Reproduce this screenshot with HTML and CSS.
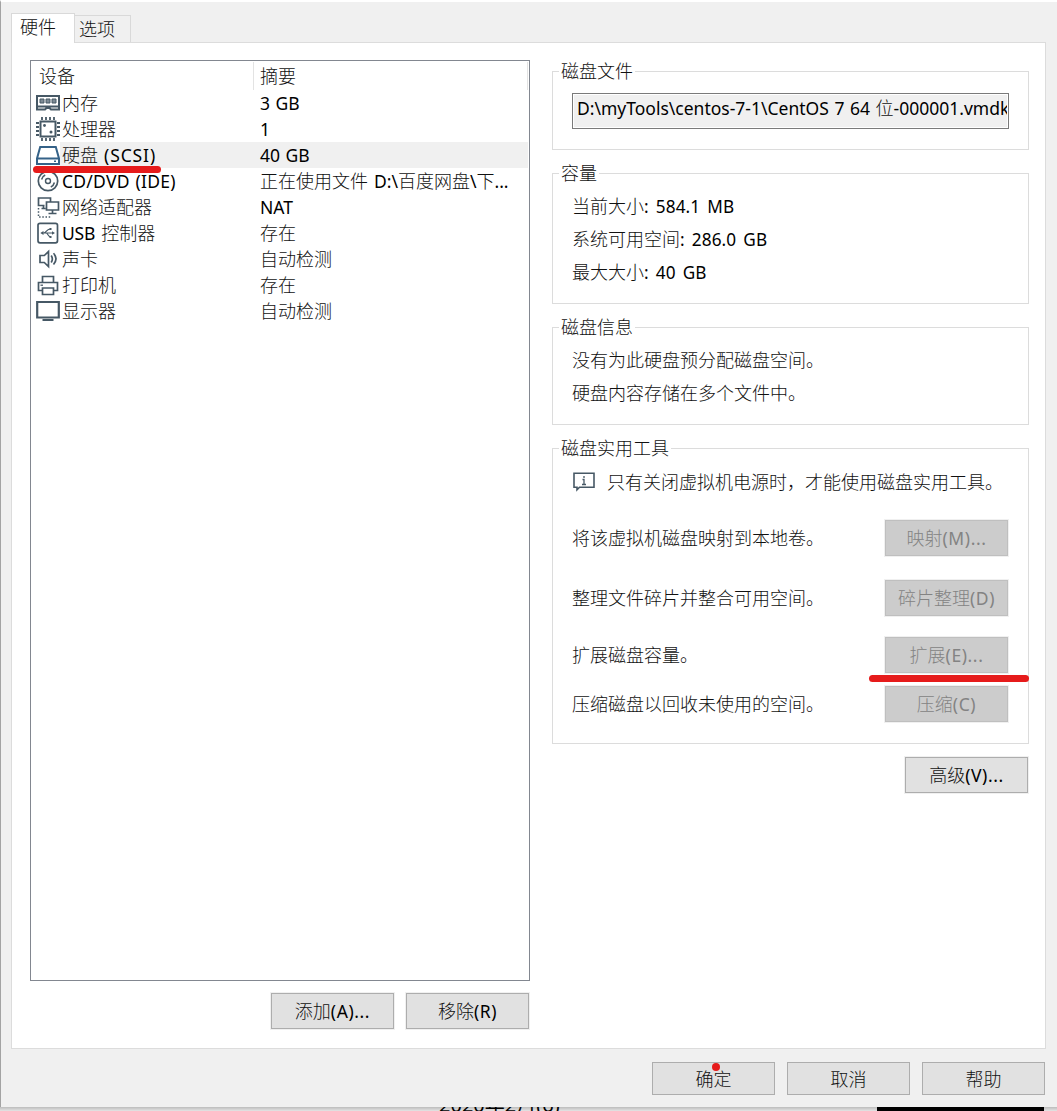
FILE: index.html
```html
<!DOCTYPE html>
<html lang="zh-CN">
<head>
<meta charset="utf-8">
<title>虚拟机设置</title>
<link rel="stylesheet" href="styles.css">
</head>
<body>
<main class="dialog">
  <nav class="tabs">
    <div class="tab tab-active">硬件</div>
    <div class="tab">选项</div>
  </nav>
  <section class="panel">
    <div class="left">
      <div class="devices">
        <div class="head"><span class="head-device">设备</span><span class="head-summary">摘要</span></div>
        <div class="row">
          <svg class="icon" viewBox="0 0 26 26"><path d="M2 6h22v10.500H2zM2 19.500h8l1.500-1.500h3l1.500 1.500h8M2 6v14.500M24 6v14.500" fill="none" stroke="#465865" stroke-width="2"/><path d="M5 9h4v4H5zM11 9h4v4h-4zM17 9h4v4h-4z" fill="#7d8a94" stroke="#465865"/></svg>
          <span class="name">内存</span><span class="value"><b>3 GB</b></span>
        </div>
        <div class="row">
          <svg class="icon" viewBox="0 0 26 26"><path d="M5.500 5.500h15v15h-15z" fill="none" stroke="#465865" stroke-width="2"/><path d="M7 1v3M11 1v3M15 1v3M19 1v3M7 22v3M11 22v3M15 22v3M19 22v3M1 7h3M1 11h3M1 15h3M1 19h3M22 7h3M22 11h3M22 15h3M22 19h3" stroke="#465865" stroke-width="1.800"/><circle cx="9.500" cy="9.500" r="1.400" fill="#465865"/><circle cx="16" cy="16" r="1.500" fill="#465865"/></svg>
          <span class="name">处理器</span><span class="value"><b>1</b></span>
        </div>
        <div class="row row-selected">
          <svg class="icon" viewBox="0 0 26 26"><path d="M5.200 5h15.600L24 16.500V22H2v-5.500zM2 16.500h22" fill="#fff" stroke="#356288" stroke-width="2"/><path d="M19 19.300h2" stroke="#356288" stroke-width="1.500"/></svg>
          <span class="name">硬盘 <b>(SCSI)</b></span><span class="value"><b>40 GB</b></span>
          <i class="mark mark-disk"></i>
        </div>
        <div class="row">
          <svg class="icon" viewBox="0 0 26 26" fill="none" stroke="#465865"><circle cx="13" cy="13" r="9.700" stroke-width="1.700"/><circle cx="13" cy="13" r="2.500" stroke-width="1.400"/><path d="M6.600 11.500a6.700 6.700 0 0 1 3.600-4.500M19.400 14.500a6.700 6.700 0 0 1-3.600 4.500" stroke-width="1.500"/></svg>
          <span class="name"><b>CD/DVD (IDE)</b></span><span class="value">正在使用文件 <b>D:\</b>百度网盘<b>\</b>下<b>...</b></span>
        </div>
        <div class="row">
          <svg class="icon" viewBox="0 0 26 26" fill="none" stroke="#465865" stroke-width="1.700"><path d="M9.500 11.500h-6V4h12v4M6.500 14.500h4M8.500 11v3.500M11.500 8h12v8h-12zM17.500 16v3M13.500 19.500h8"/><path d="M3.500 14v9h13" stroke-dasharray="1.500 1.700" stroke-width="1.500"/></svg>
          <span class="name">网络适配器</span><span class="value"><b>NAT</b></span>
        </div>
        <div class="row">
          <svg class="icon" viewBox="0 0 26 26" fill="none" stroke="#465865"><rect x="3" y="3.300" width="19.500" height="19.500" rx="2" stroke-width="1.700"/><path d="M7 13h11M8.500 13c3 0 3-4 7-4M11 13c2 0 2 4 5 4" stroke-width="1.200"/><path d="M8.500 11v4L5.300 13zM17 11.200v3.600l3-1.800zM14.500 8h2v2h-2zM14.500 16h2v2h-2z" fill="#465865" stroke="none"/></svg>
          <span class="name"><b class="usb">USB</b> 控制器</span><span class="value">存在</span>
        </div>
        <div class="row">
          <svg class="icon" viewBox="0 0 26 26" fill="none" stroke="#465865" stroke-width="1.700"><path d="M5 9.500h4.300L13.500 5.500v15l-4.200-4H5zM16.200 9.500q2.300 3.500 0 7M18.500 7.300q5 5.500 0 11.200"/></svg>
          <span class="name">声卡</span><span class="value">自动检测</span>
        </div>
        <div class="row">
          <svg class="icon" viewBox="0 0 26 26" fill="none" stroke="#465865" stroke-width="1.700"><path d="M7.500 10.500v-6h11v6M7.500 18.500h-4v-8h19v8h-4M7.500 16h11v6.500h-11z"/><path d="M5.500 13.200H8" stroke-width="1.300"/></svg>
          <span class="name">打印机</span><span class="value">存在</span>
        </div>
        <div class="row">
          <svg class="icon" viewBox="0 0 26 26"><path d="M2.200 4h21.600v15.500H2.200z" fill="none" stroke="#465865" stroke-width="2.200"/><path d="M7.500 22h11" stroke="#465865" stroke-width="2"/></svg>
          <span class="name">显示器</span><span class="value">自动检测</span>
        </div>
      </div>
      <div class="actions">
        <button class="btn">添加<b>(A)...</b></button>
        <button class="btn">移除<b>(R)</b></button>
      </div>
    </div>
    <div class="right">
      <section class="group group-file">
        <h2>磁盘文件</h2>
        <div class="path"><b>D:\myTools\centos-7-1\CentOS 7 64 </b>位<b>-000001.vmdk</b></div>
      </section>
      <section class="group group-size">
        <h2>容量</h2>
        <p>当前大小<b>: 584.1 MB</b></p>
        <p>系统可用空间<b>: 286.0 GB</b></p>
        <p>最大大小<b>: 40 GB</b></p>
      </section>
      <section class="group group-info">
        <h2>磁盘信息</h2>
        <p>没有为此硬盘预分配磁盘空间。</p>
        <p>硬盘内容存储在多个文件中。</p>
      </section>
      <section class="group group-tools">
        <h2>磁盘实用工具</h2>
        <div class="note">
          <svg class="note-icon" viewBox="0 0 24 22"><path d="M2 2.200h20v14H7.500L5 18.800v-2.600H2z" fill="none" stroke="#465865" stroke-width="1.600"/><path d="M12 5v2M10.500 8.500H12V13M10 13.500h4" fill="none" stroke="#465865" stroke-width="1.300"/></svg>
          <span>只有关闭虚拟机电源时，才能使用磁盘实用工具。</span>
        </div>
        <div class="tool"><span>将该虚拟机磁盘映射到本地卷。</span><button class="btn" disabled>映射<b>(M)...</b></button></div>
        <div class="tool tool-defrag"><span>整理文件碎片并整合可用空间。</span><button class="btn" disabled>碎片整理<b>(D)</b></button></div>
        <div class="tool tool-expand"><span>扩展磁盘容量。</span><button class="btn" disabled>扩展<b>(E)...</b></button><i class="mark mark-expand"></i></div>
        <div class="tool tool-compact"><span>压缩磁盘以回收未使用的空间。</span><button class="btn" disabled>压缩<b>(C)</b></button></div>
      </section>
      <button class="btn advanced">高级<b>(V)...</b></button>
    </div>
  </section>
  <footer class="footer">
    <button class="btn">确定<i class="dot"></i></button>
    <button class="btn">取消</button>
    <button class="btn">帮助</button>
  </footer>
</main>
<div class="behind"><span class="date">2020年2月(6)</span><span class="block"></span></div>
</body>
</html>
```
FILE: styles.css
```css
* { box-sizing: border-box; }
body {
  margin: 0;
  width: 1057px;
  height: 1111px;
  overflow: hidden;
  background: #fff;
  color: #111;
  font: 300 18px/26px "Noto Sans CJK SC", sans-serif;
  word-spacing: 2px;
}
b { font: 400 17.5px/1 "Noto Sans", sans-serif; color: #000; word-spacing: 1px; }
p, h2 { margin: 0; font-weight: 300; font-size: inherit; }

.dialog {
  height: 1107px;
  padding: 11px 11px 0 10px;
  border-top: 2px solid #fff;
  border-left: 1px solid #a3a3a3;
  background: #f0f0f0;
}
.tabs { display: flex; align-items: flex-end; height: 29px; }
.tab { width: 56px; height: 27px; padding-left: 4px; border: 1px solid #d9d9d9; border-left: 0; border-bottom: 0; line-height: 24px; white-space: nowrap; }
.tab-active {
  width: 64px;
  height: 30px;
  margin-bottom: -1px;
  padding-left: 8px;
  border-left: 1px solid #d9d9d9;
  background: #fff;
  z-index: 1;
}
.panel {
  display: flex;
  gap: 22px;
  width: 1035px;
  height: 1007px;
  padding: 17px 16px 0 18px;
  border: 1px solid #dcdcdc;
  background: #fff;
}
.left { width: 500px; }
.devices { height: 921px; border: 1px solid #828790; }
.head { display: flex; height: 29px; padding: 1px 1px 0 0; line-height: 26px; }
.head-device { width: 223px; padding-left: 8px; border-right: 1px solid #e3e3e3; }
.head-summary { flex: 1; padding-left: 6px; border-right: 1px solid #e3e3e3; }
.row { position: relative; display: flex; height: 26px; padding-left: 4px; line-height: 24px; white-space: pre; }
.row-selected { background: linear-gradient(90deg, #fff 29px, #f0f0f0 29px, #f0f0f0 497px, #fff 497px); }
.row-selected .name b { letter-spacing: .9px; }
.icon { flex: none; width: 26px; height: 26px; }
.name { width: 199px; padding-left: 1px; }
.name b { letter-spacing: .25px; }
.name .usb { letter-spacing: -.2px; }
.actions { display: flex; justify-content: flex-end; gap: 12px; padding: 12px 1px 0 0; }
.btn {
  position: relative;
  width: 123px;
  height: 36px;
  padding: 0 0 2px;
  border: 1px solid #adadad;
  background: #e1e1e1;
  box-shadow: 0 0 0 1px #f0f0f0;
  color: #111;
  font: inherit;
  line-height: 24px;
  white-space: pre;
}
.btn:disabled { border-color: #bfbfbf; background: #ccc; color: #838383; }
.btn b { letter-spacing: .6px; }
.btn:disabled b { color: #838383; }

.right { display: flex; flex-direction: column; width: 477px; padding-top: 11px; }
.group { padding: 0 19px; border: 1px solid #dcdcdc; white-space: nowrap; }
.group h2 { width: fit-content; height: 26px; margin: -14px 0 0 -13px; padding: 0 2px; background: #fff; line-height: 24px; }
.group p { height: 33px; line-height: 31px; }
.group p b { font-size: 17.2px; word-spacing: 2.5px; letter-spacing: .1px; }
.group-file { height: 79px; }
.group-size { height: 131px; margin-top: 23px; }
.group-info { height: 98px; margin-top: 23px; }
.group-tools { height: 296px; margin-top: 23px; }
.group-size h2, .group-info h2 { margin-bottom: 4px; }
.path {
  height: 36px;
  margin-top: 9px;
  padding: 0 0 0 4px;
  border: 1px solid #7a7a7a;
  outline: 1px solid #fff;
  outline-offset: -2px;
  background: #f0f0f0;
  line-height: 26px;
  overflow: hidden;
}
.note { display: flex; align-items: center; height: 36px; margin: 3px 0 20px; }
.note-icon { width: 24px; height: 22px; margin: 0 11px 0 0; }
.note span, .tool span { padding-bottom: 2px; }
.tool { position: relative; display: flex; align-items: center; justify-content: space-between; height: 36px; margin-right: 1px; }
.tool-defrag { margin-top: 24px; }
.tool-expand { margin-top: 21px; }
.tool-compact { margin-top: 13px; }
.advanced { align-self: flex-end; margin: 13px 1px 0 0; }

.footer { display: flex; justify-content: flex-end; gap: 12px; padding: 13px 1px 0 0; }
.footer .btn { height: 33px; box-shadow: none; }

.mark { position: absolute; height: 7px; border-radius: 4px; background: #e61b1b; z-index: 2; }
.mark-disk { left: 2px; top: 24px; width: 128px; }
.mark-expand { left: 297px; top: 38px; width: 160px; }
.dot { position: absolute; left: 59px; top: 0; width: 8px; height: 8px; border-radius: 50%; background: #e61b1b; }

.behind {
  display: flex;
  align-items: flex-end;
  height: 4px;
  padding: 0 13px 0 439px;
  overflow: hidden;
  background: linear-gradient(#bcbcbc, #e4e4e4);
}
.date { margin-bottom: -7px; font: 400 20px/26px "Noto Sans", "Noto Sans CJK SC", sans-serif; color: #000; word-spacing: 0; }
.block { width: 167px; height: 4px; margin-left: auto; background: #000; }
```
